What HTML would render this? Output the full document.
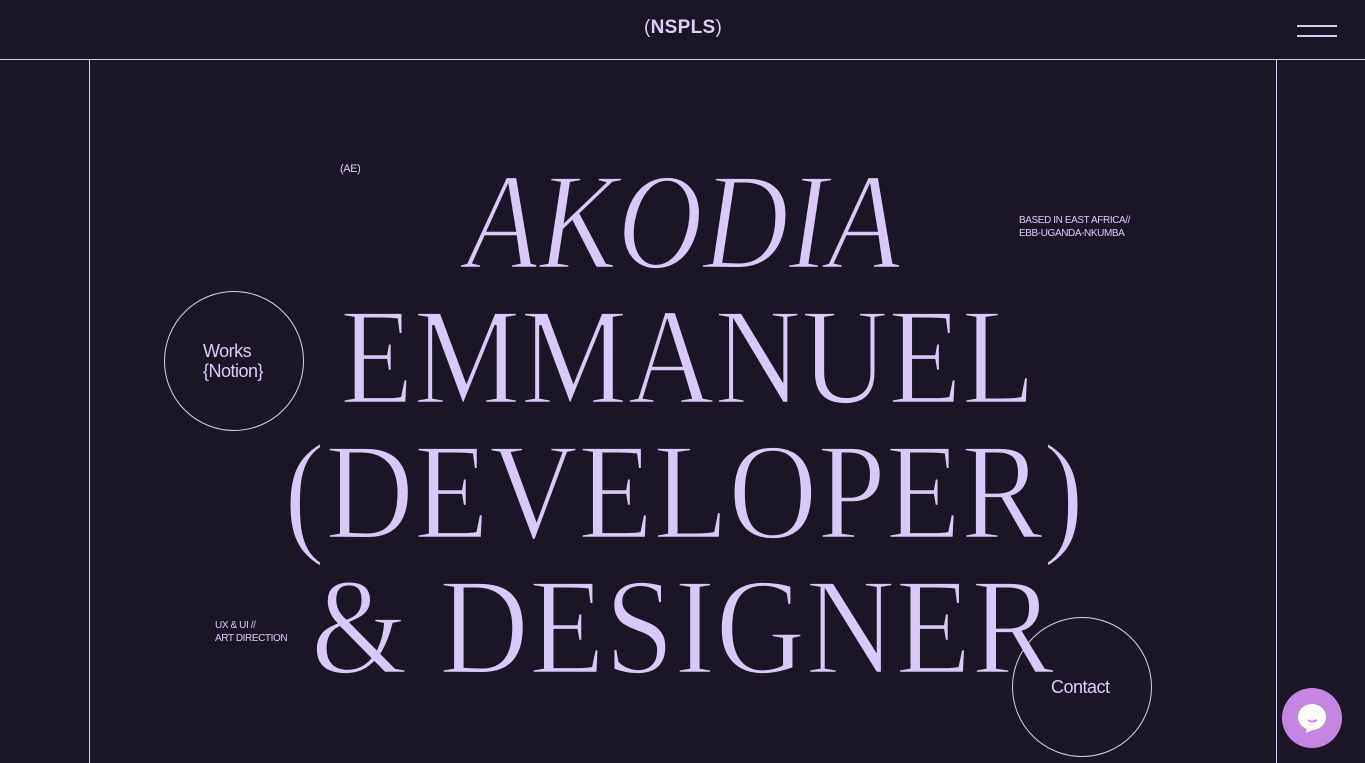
<!DOCTYPE html>
<html><head><meta charset="utf-8"><style>
html,body{margin:0;padding:0;width:1365px;height:763px;overflow:hidden;background:#1b1626;color:#dccff8;font-family:"Liberation Sans",sans-serif;position:relative}
.hdr{position:absolute;left:0;top:0;width:1365px;height:59px;border-bottom:1px solid #d8cdf3}
.logo{position:absolute;left:644px;top:17px;font-size:19px;font-weight:bold;letter-spacing:0.3px}
.logo span{font-weight:normal}
.bar{position:absolute;left:1297px;width:40px;height:2px;background:#d8cdf3}
.vl{position:absolute;top:60px;width:1px;height:703px;background:#d8cdf3}
.big{position:absolute;font-family:"Liberation Serif",serif;font-size:138px;line-height:1;white-space:nowrap;transform-origin:0 0;color:#d8c9f7;-webkit-text-stroke:2.5px #1b1626}
.sm{position:absolute;font-size:10px;line-height:13px;letter-spacing:-0.4px}
.circ{position:absolute;border:1px solid #d8cdf3;border-radius:50%;box-sizing:border-box}
.ct{position:absolute;font-size:18px;line-height:20px;letter-spacing:-0.5px}
</style></head><body>
<div class="hdr"><div class="logo"><span>(</span>NSPLS<span>)</span></div>
<div class="bar" style="top:25px"></div><div class="bar" style="top:35px"></div></div>
<div class="vl" style="left:89px"></div><div class="vl" style="left:1276px"></div>
<div class="sm" style="left:340px;top:163px;font-size:11px">(AE)</div>
<div class="sm" style="left:1019px;top:214px">BASED IN EAST AFRICA//<br>EBB-UGANDA-NKUMBA</div>
<div class="sm" style="left:215px;top:619px">UX &amp; UI //<br>ART DIRECTION</div>
<div class="big" style="left:466px;top:153px;font-style:italic;transform:scaleX(0.858)">AKODIA</div>
<div class="big" style="left:340px;top:288px;transform:scaleX(0.872)">EMMANUEL</div>
<div class="big" style="left:284px;top:423px;transform:scaleX(0.892)">(DEVELOPER)</div>
<div class="big" style="left:311px;top:558px;transform:scaleX(0.902)">&amp; DESIGNER</div>
<div class="circ" style="left:164px;top:291px;width:140px;height:140px"></div>
<div class="ct" style="left:203px;top:341px">Works<br>{Notion}</div>
<div class="circ" style="left:1012px;top:617px;width:140px;height:140px"></div>
<div class="ct" style="left:1051px;top:677px">Contact</div>
<div style="position:absolute;left:1282px;top:688px;width:60px;height:60px;border-radius:50%;background:#c386e3"></div>
<svg style="position:absolute;left:1282px;top:688px" width="60" height="60" viewBox="0 0 60 60"><ellipse cx="30" cy="29" rx="14" ry="13" fill="#fff"/><path d="M25 39 L24 45 L33 41Z" fill="#fff"/><path d="M26 32 Q30 35 35 32" stroke="#c386e3" stroke-width="2" fill="none"/></svg>
</body></html>
